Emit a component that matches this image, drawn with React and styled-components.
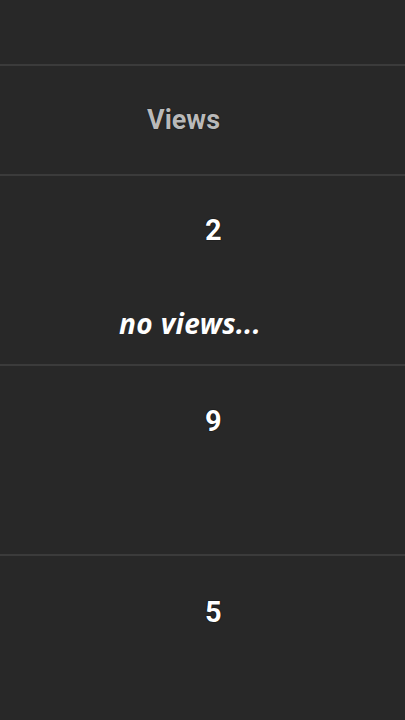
import React from 'react';
import styled, {createGlobalStyle} from 'styled-components';

const GlobalStyle = createGlobalStyle`
  html, body {
    margin: 0;
    padding: 0;
    background: #282828;
  }
`;

const Page = styled.div`
  position: relative;
  width: 405px;
  height: 720px;
  overflow: hidden;
  background: #282828;
  font-family: Roboto, 'Liberation Sans', sans-serif;
`;

const TopBand = styled.div`
  height: 64px;
`;

const Divider = styled.div`
  height: 2px;
  background: #3b3b3b;
`;

const HeaderRow = styled.div`
  height: 108px;
  display: flex;
  align-items: center;
  padding-left: 147px;
`;

const HeaderLabel = styled.span`
  font-size: 27px;
  font-weight: 700;
  line-height: 1;
  color: #b9b9b9;
  text-shadow: 0 0 1px #000;
`;

const DataRow = styled.div`
  height: 188px;
  box-sizing: border-box;
  padding-top: ${p => p.$top}px;
  padding-left: 205px;
`;

const Count = styled.span`
  display: inline-block;
  font-size: 29px;
  font-weight: 700;
  line-height: 1;
  color: #ffffff;
  text-shadow: 0 0 1px #000, 0 0 1px #000;
`;

const Caption = styled.div`
  position: absolute;
  left: 119px;
  top: 304px;
  font-family: 'Noto Sans', 'Open Sans', sans-serif;
  font-style: italic;
  font-weight: 700;
  font-size: 28px;
  line-height: 38px;
  color: #ffffff;
  letter-spacing: 0.4px;
`;

const rows = [
  {views: 2, top: 40},
  {views: 9, top: 41},
  {views: 5, top: 42},
];

export default function App() {
  return (
    <Page>
      <GlobalStyle />
      <TopBand />
      <Divider />
      <HeaderRow>
        <HeaderLabel>Views</HeaderLabel>
      </HeaderRow>
      {rows.map((r, i) => (
        <React.Fragment key={i}>
          <Divider />
          <DataRow $top={r.top}>
            <Count>{r.views}</Count>
          </DataRow>
        </React.Fragment>
      ))}
      <Caption>no views...</Caption>
    </Page>
  );
}
